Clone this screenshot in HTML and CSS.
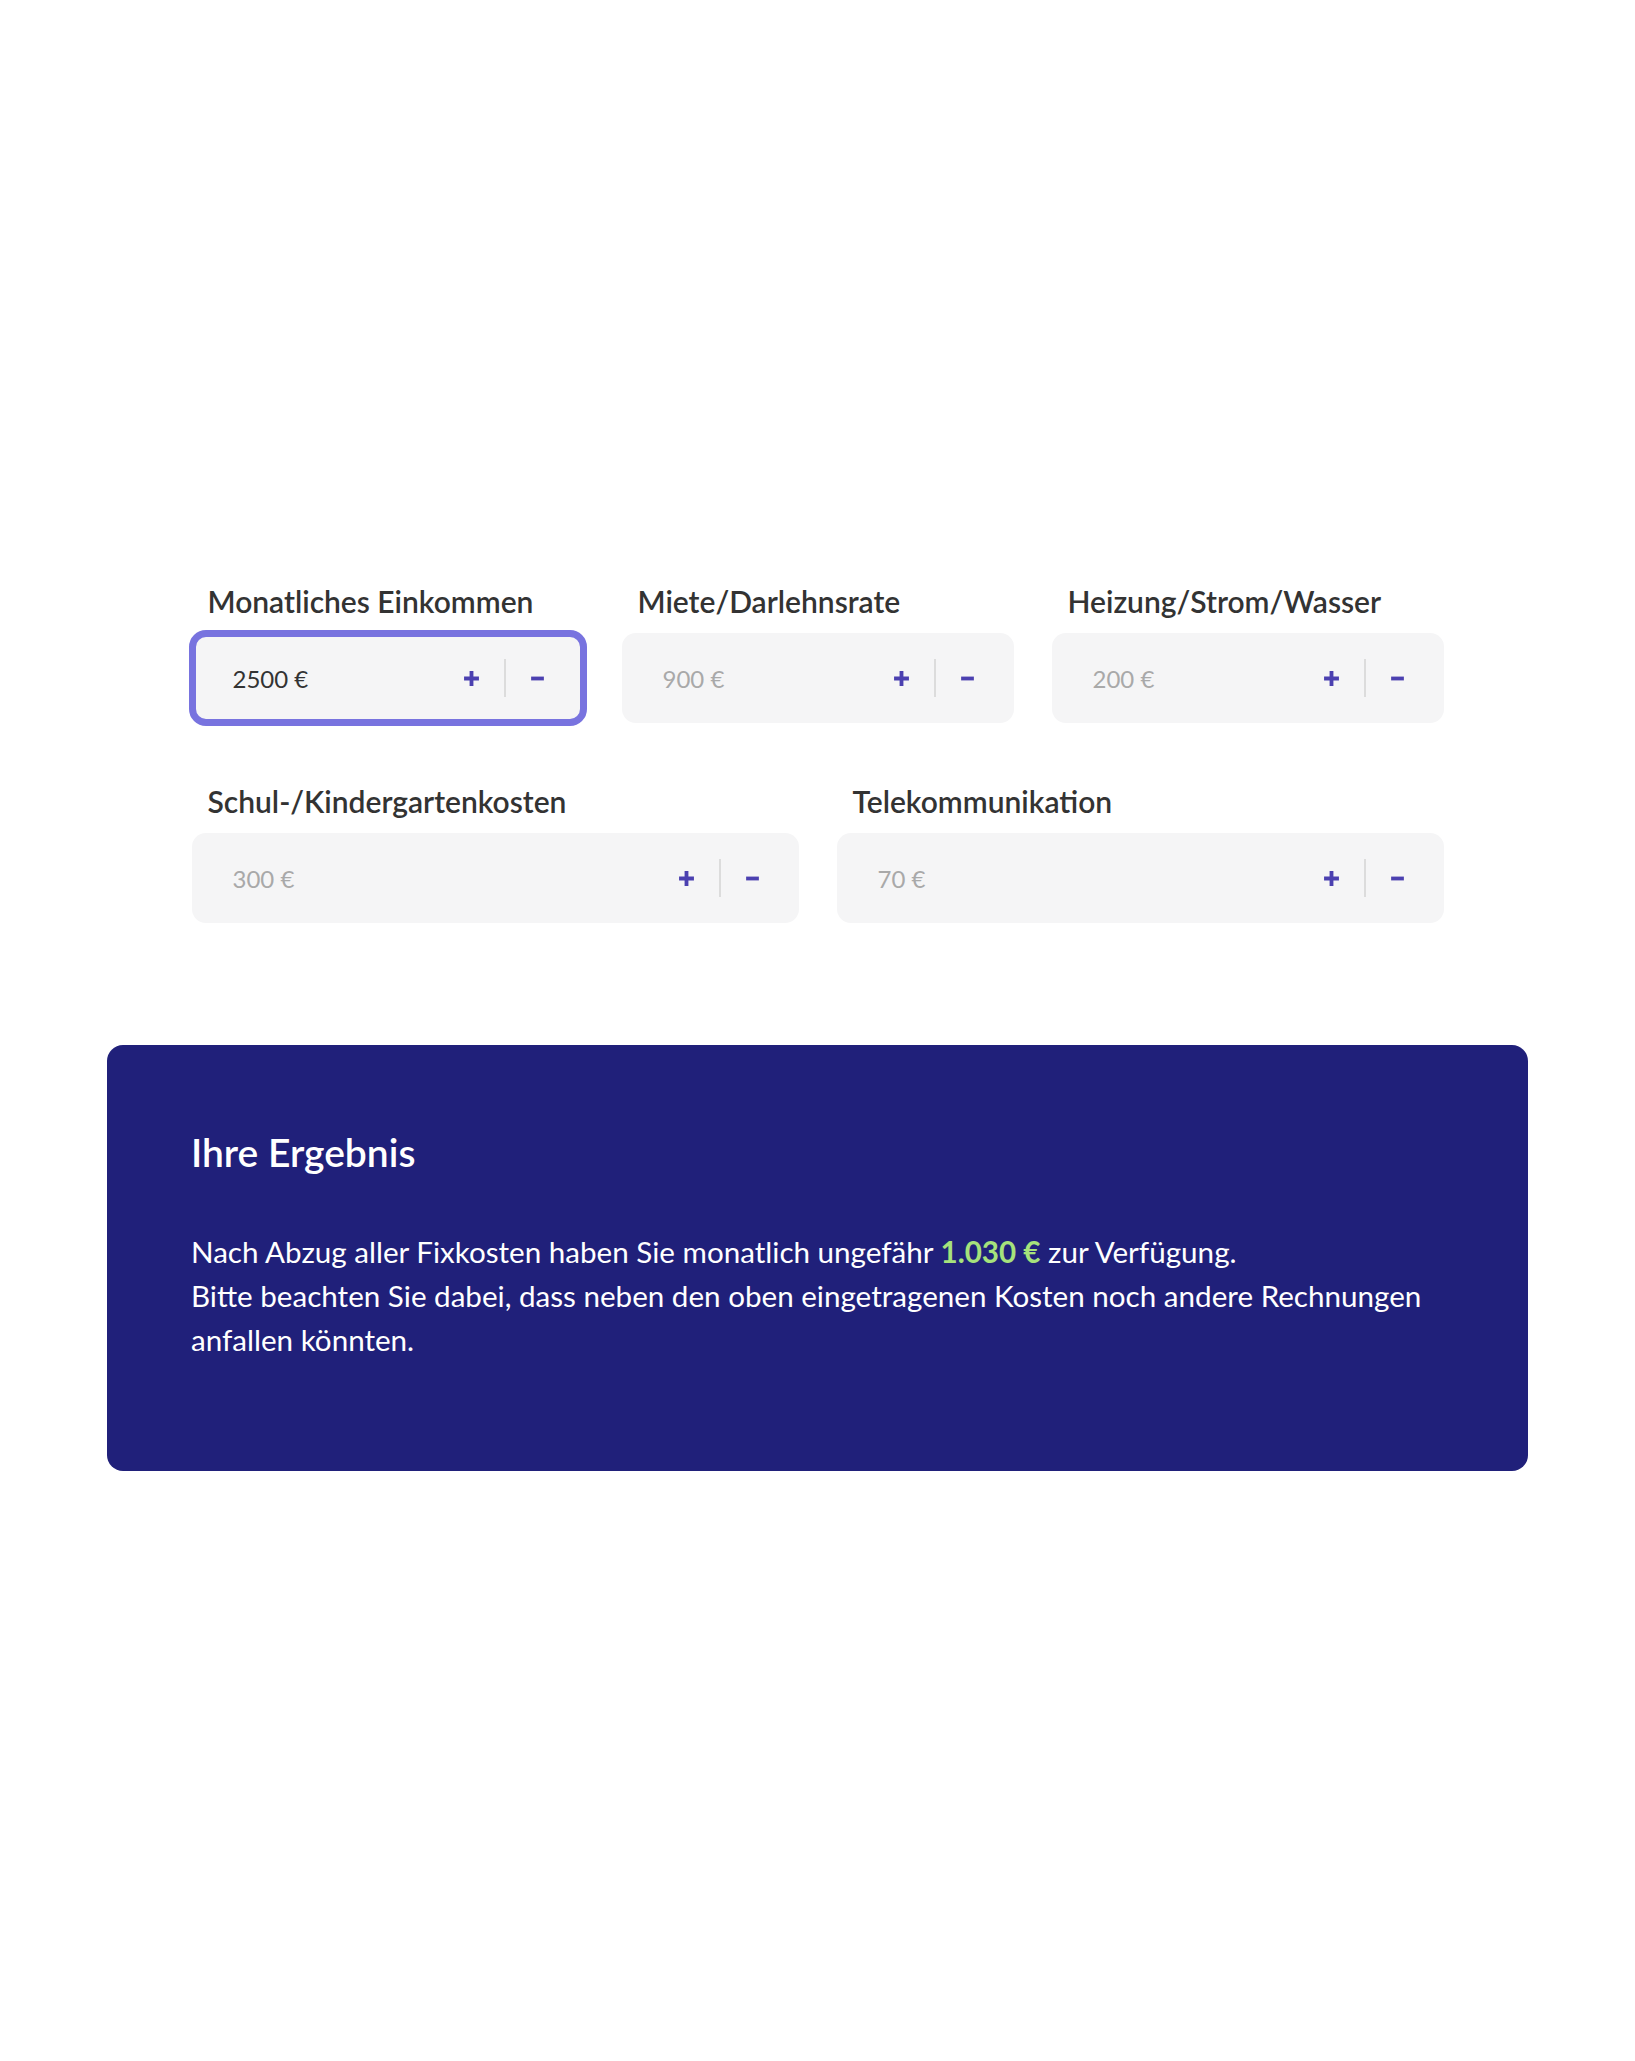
FILE: index.html
```html
<!DOCTYPE html>
<html lang="de">
<head>
  <meta charset="UTF-8" />
  <meta name="viewport" content="width=device-width, initial-scale=1.0"/>
  <title>Fixkostenrechner</title>
  <link rel="stylesheet" href="styles.css">
</head>
<body>
  <div id="calc">
    <div class="row row-3">
      <div class="field">
        <label for="income">Monatliches Einkommen</label>
        <div class="stepper is-focused">
          <input id="income" type="text" value="2500 €">
          <button class="step" aria-label="Erhöhen"><svg viewBox="0 0 16 16"><path d="M8 1v14M1 8h14"/></svg></button>
          <span class="sep"></span>
          <button class="step" aria-label="Verringern"><svg viewBox="0 0 16 16"><path d="M2 8h12"/></svg></button>
        </div>
      </div>
      <div class="field">
        <label for="rent">Miete/Darlehnsrate</label>
        <div class="stepper">
          <input id="rent" type="text" placeholder="900 €">
          <button class="step" aria-label="Erhöhen"><svg viewBox="0 0 16 16"><path d="M8 1v14M1 8h14"/></svg></button>
          <span class="sep"></span>
          <button class="step" aria-label="Verringern"><svg viewBox="0 0 16 16"><path d="M2 8h12"/></svg></button>
        </div>
      </div>
      <div class="field">
        <label for="utilities">Heizung/Strom/Wasser</label>
        <div class="stepper">
          <input id="utilities" type="text" placeholder="200 €">
          <button class="step" aria-label="Erhöhen"><svg viewBox="0 0 16 16"><path d="M8 1v14M1 8h14"/></svg></button>
          <span class="sep"></span>
          <button class="step" aria-label="Verringern"><svg viewBox="0 0 16 16"><path d="M2 8h12"/></svg></button>
        </div>
      </div>
    </div>
    <div class="row row-2">
      <div class="field">
        <label for="school">Schul-/Kindergartenkosten</label>
        <div class="stepper">
          <input id="school" type="text" placeholder="300 €">
          <button class="step" aria-label="Erhöhen"><svg viewBox="0 0 16 16"><path d="M8 1v14M1 8h14"/></svg></button>
          <span class="sep"></span>
          <button class="step" aria-label="Verringern"><svg viewBox="0 0 16 16"><path d="M2 8h12"/></svg></button>
        </div>
      </div>
      <div class="field">
        <label for="telecom">Telekommunikation</label>
        <div class="stepper">
          <input id="telecom" type="text" placeholder="70 €">
          <button class="step" aria-label="Erhöhen"><svg viewBox="0 0 16 16"><path d="M8 1v14M1 8h14"/></svg></button>
          <span class="sep"></span>
          <button class="step" aria-label="Verringern"><svg viewBox="0 0 16 16"><path d="M2 8h12"/></svg></button>
        </div>
      </div>
    </div>
  </div>

  <div id="result">
    <h2>Ihre Ergebnis</h2>
    <p>
      Nach Abzug aller Fixkosten haben Sie monatlich ungefähr <strong>1.030 €</strong> zur Verfügung.<br>
      Bitte beachten Sie dabei, dass neben den oben eingetragenen Kosten noch andere Rechnungen anfallen könnten.
    </p>
  </div>
</body>
</html>
```

FILE: styles.css
```css
:root {
  --text: #333333;
  --muted: #a9a9a9;
  --field-bg: #f5f5f6;
  --accent: #4b40b0;
  --focus: #7873df;
  --navy: #20207a;
  --green: #a6e27c;
}
* {
  box-sizing: border-box;
  margin: 0;
  padding: 0;
}
body {
  font-family: 'Lato', 'Noto Sans', sans-serif;
  background: #ffffff;
  color: var(--text);
  padding-top: 583px;
}
#calc {
  width: 1252px;
  margin: 0 auto;
  display: flex;
  flex-direction: column;
  gap: 60px;
}
.row {
  display: grid;
  gap: 38px;
}
.row-3 {
  grid-template-columns: repeat(3, minmax(0, 1fr));
}
.row-2 {
  grid-template-columns: repeat(2, minmax(0, 1fr));
}
.field label {
  display: block;
  font-size: 30px;
  font-weight: 600;
  line-height: 36px;
  padding-left: 16px;
  margin-bottom: 14px;
  white-space: nowrap;
}
.stepper {
  display: flex;
  align-items: center;
  height: 90px;
  padding-right: 14px;
  background: var(--field-bg);
  border-radius: 14px;
}
.stepper.is-focused {
  outline: 7px solid var(--focus);
  outline-offset: -4px;
}
.stepper input {
  flex: 1;
  width: 0;
  min-width: 0;
  height: 100%;
  padding-left: 41px;
  border: none;
  background: transparent;
  font-family: inherit;
  font-size: 24px;
  color: var(--text);
  outline: none;
}
.stepper input::placeholder {
  color: var(--muted);
}
.step {
  flex: none;
  width: 64px;
  height: 60px;
  border: none;
  background: none;
  display: flex;
  align-items: center;
  justify-content: center;
  cursor: pointer;
}
.step svg {
  width: 17px;
  height: 17px;
  stroke: var(--accent);
  stroke-width: 3.6;
  fill: none;
}
.sep {
  flex: none;
  width: 2px;
  height: 38px;
  background: #dcdcdc;
}
#result {
  width: 1421px;
  margin: 122px auto 0;
  padding: 83px 84px 109px;
  background: var(--navy);
  border-radius: 16px;
  color: #ffffff;
}
#result h2 {
  font-size: 39px;
  font-weight: 600;
  line-height: 48px;
  margin-bottom: 54px;
}
#result p {
  font-size: 29.6px;
  line-height: 44px;
}
#result strong {
  color: var(--green);
  font-weight: 700;
}
```
